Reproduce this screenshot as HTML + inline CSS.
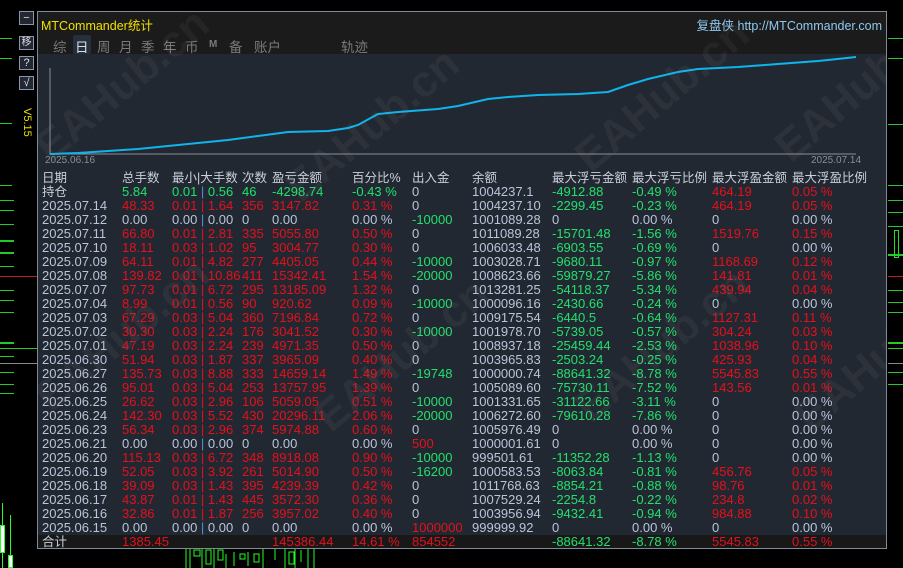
<!DOCTYPE html>
<html><head><meta charset="utf-8">
<style>
*{margin:0;padding:0;box-sizing:border-box}
body{width:903px;height:568px;background:#000;position:relative;overflow:hidden;font-family:"Liberation Sans","Noto Sans CJK SC",sans-serif;}
.ab{position:absolute}
.d{position:absolute;height:1px;background:#22cc22}
#panel{position:absolute;left:37px;top:11px;width:850px;height:538px;border:1px solid #7f8a9a;background:#222831;overflow:hidden}
#title{position:absolute;left:0;top:0;width:848px;height:42px;background:#1b1b1b}
.btn{position:absolute;left:19px;width:15px;height:14px;border:1px solid #8a96a8;background:#222831;color:#dde;font-size:11px;line-height:12px;text-align:center}
.tab{position:absolute;top:24px;font-size:13.5px;color:#7a7a7a}
.r{position:absolute;left:0;width:848px;height:14px;font-size:13px;line-height:14px;white-space:nowrap}
.r span{position:absolute;top:0}
.c1{left:4px}.c2{left:84px}.c3{left:134px}.c4{left:204px}.c5{left:234px}.c6{left:314px}.c7{left:374px}.c8{left:434px}.c9{left:514px}.c10{left:594px}.c11{left:674px}.c12{left:754px}
.g{color:#b9c5da}.R{color:#e5101c}.G{color:#22e06c}.h{color:#c8d0dc;font-size:12.5px}
.sep{color:#4a90d9;font-weight:normal}
.wm{position:absolute;color:rgba(160,160,170,0.08);font-size:44px;font-weight:bold;transform:rotate(-40deg);transform-origin:left bottom;white-space:nowrap}
</style></head><body>
<div class="d" style="left:0;top:38px;width:12px"></div><div class="d" style="left:0;top:58px;width:12px"></div>
<div class="d" style="left:0;top:123px;width:12px"></div><div class="d" style="left:0;top:185px;width:12px"></div>
<div class="d" style="left:0;top:200px;width:14px"></div><div class="d" style="left:0;top:210px;width:14px"></div>
<div class="d" style="left:0;top:224px;width:14px"></div><div class="d" style="left:0;top:240px;width:14px;height:2px"></div>
<div class="d" style="left:0;top:252px;width:14px;height:2px"></div><div class="d" style="left:0;top:266px;width:14px"></div>
<div class="d" style="left:0;top:276px;width:37px;background:#c02020"></div>
<div class="d" style="left:0;top:290px;width:14px"></div><div class="d" style="left:0;top:300px;width:14px"></div>
<div class="d" style="left:0;top:312px;width:14px"></div><div class="d" style="left:0;top:342px;width:14px;height:2px"></div>
<div class="d" style="left:0;top:348px;width:37px"></div><div class="d" style="left:0;top:356px;width:14px"></div>
<div class="d" style="left:0;top:363px;width:37px;background:#888"></div><div class="d" style="left:0;top:372px;width:14px"></div>
<div class="d" style="left:0;top:384px;width:14px"></div><div class="d" style="left:0;top:393px;width:14px"></div>
<div class="d" style="left:888px;top:38px;width:15px"></div><div class="d" style="left:888px;top:58px;width:15px"></div>
<div class="d" style="left:888px;top:124px;width:15px"></div><div class="d" style="left:888px;top:185px;width:15px"></div>
<div class="d" style="left:888px;top:200px;width:15px"></div><div class="d" style="left:888px;top:212px;width:15px"></div>
<div class="d" style="left:888px;top:226px;width:15px"></div><div class="d" style="left:888px;top:254px;width:15px;height:2px"></div>
<div class="d" style="left:888px;top:276px;width:15px;background:#c02020"></div><div class="d" style="left:888px;top:290px;width:15px"></div>
<div class="d" style="left:888px;top:302px;width:15px"></div><div class="d" style="left:888px;top:312px;width:15px"></div>
<div class="d" style="left:888px;top:342px;width:15px;height:2px"></div><div class="d" style="left:888px;top:348px;width:15px"></div>
<div class="d" style="left:888px;top:363px;width:15px;background:#888"></div><div class="d" style="left:888px;top:372px;width:15px"></div>
<div class="d" style="left:888px;top:384px;width:15px"></div>
<div class="ab" style="left:894px;top:230px;width:5px;height:28px;border:1px solid #2d2"></div>
<div class="ab" style="left:2px;top:503px;width:1px;height:65px;background:#2f2"></div>
<div class="ab" style="left:0;top:525px;width:5px;height:28px;background:#fff;border:1px solid #2f2"></div>
<div class="ab" style="left:10px;top:515px;width:1px;height:53px;background:#2f2"></div>
<div class="ab" style="left:8px;top:555px;width:5px;height:13px;background:#fff;border:1px solid #2f2"></div>
<svg class="ab" style="left:180px;top:548px" width="140" height="20"><g stroke="#2f2" fill="none"><path d="M6 0v20M10 0v20M14 2h6v6h-6zM22 0v20M26 2h5v14h-5zM34 0v20M38 2h5v10h-5zM46 6v14M54 4v14M60 6h5v5h-5zM68 4v14M74 6h5v8h-5zM83 0v20M95 0v12M105 0v20M109 4h5v12h-5zM115 0v20M121 2v12M128 0v20M134 0v20"/></g></svg>
<div class="btn" style="top:11px">−</div>
<div class="btn" style="top:36px;font-size:10px">移</div>
<div class="btn" style="top:56px">?</div>
<div class="btn" style="top:76px">√</div>
<div class="ab" style="top:108px;color:#e8e000;font-size:11px;transform:rotate(90deg);transform-origin:left top;left:33px">V5.15</div>

<div id="panel">
 <div id="title">
  <div class="ab" style="left:3px;top:3px;color:#f0e000;font-size:12.5px">MTCommander统计</div>
  <div class="ab" style="right:4px;top:3px;color:#8ec8f0;font-size:12.5px">复盘侠 http://MTCommander.com</div>
  <div class="ab" style="left:35px;top:23px;width:18px;height:19px;background:#26303c;border-radius:2px"></div>
  <span class="tab" style="left:15px">综</span>
  <span class="tab" style="left:37px;color:#d8e0ea">日</span>
  <span class="tab" style="left:59px">周</span>
  <span class="tab" style="left:81px">月</span>
  <span class="tab" style="left:103px">季</span>
  <span class="tab" style="left:125px">年</span>
  <span class="tab" style="left:147px">币</span>
  <span class="tab" style="left:171px;font-size:10px;top:27px;font-weight:bold">M</span>
  <span class="tab" style="left:191px">备</span>
  <span class="tab" style="left:216px">账户</span>
  <span class="tab" style="left:303px">轨迹</span>
 </div>
 <svg class="ab" style="left:0;top:0" width="848" height="170">
  <path d="M12 56V142H818" stroke="#8a8f96" fill="none"/>
  <polyline fill="none" stroke="#10b4ec" stroke-width="2" points="12,142 40,141 70,139 100,137 130,134 160,131 190,128 220,124 250,120 290,119 310,116 320,113 340,102 360,100 400,97 420,94 450,87 470,85 500,83 540,82 570,80 590,73 610,67 640,60 660,57 700,55 740,52 780,49 790,48 818,45"/>
 </svg>
 <div class="ab" style="left:7px;top:143px;color:#8a8f96;font-size:10px">2025.06.16</div>
 <div class="ab" style="left:773px;top:143px;color:#8a8f96;font-size:10px">2025.07.14</div>

 <div class="r h" style="top:159px"><span class="c1">日期</span><span class="c2">总手数</span><span class="c3">最小|大手数</span><span class="c4">次数</span><span class="c5">盈亏金额</span><span class="c6">百分比%</span><span class="c7">出入金</span><span class="c8">余额</span><span class="c9">最大浮亏金额</span><span class="c10">最大浮亏比例</span><span class="c11">最大浮盈金额</span><span class="c12">最大浮盈比例</span></div>
 <div class="r" style="top:173px"><span class="c1 h">持仓</span><span class="c2 G">5.84</span><span class="c3 G">0.01 <b class="sep">|</b> 0.56</span><span class="c4 G">46</span><span class="c5 G">-4298.74</span><span class="c6 G">-0.43 %</span><span class="c7 g">0</span><span class="c8 g">1004237.1</span><span class="c9 G">-4912.88</span><span class="c10 G">-0.49 %</span><span class="c11 R">464.19</span><span class="c12 R">0.05 %</span></div>
 <div class="r" style="top:187px"><span class="c1 g">2025.07.14</span><span class="c2 R">48.33</span><span class="c3 R">0.01 | 1.64</span><span class="c4 R">356</span><span class="c5 R">3147.82</span><span class="c6 R">0.31 %</span><span class="c7 g">0</span><span class="c8 g">1004237.10</span><span class="c9 G">-2299.45</span><span class="c10 G">-0.23 %</span><span class="c11 R">464.19</span><span class="c12 R">0.05 %</span></div>
 <div class="r" style="top:201px"><span class="c1 g">2025.07.12</span><span class="c2 g">0.00</span><span class="c3 g">0.00 <b class="sep">|</b> 0.00</span><span class="c4 g">0</span><span class="c5 g">0.00</span><span class="c6 g">0.00 %</span><span class="c7 G">-10000</span><span class="c8 g">1001089.28</span><span class="c9 g">0</span><span class="c10 g">0.00 %</span><span class="c11 g">0</span><span class="c12 g">0.00 %</span></div>
 <div class="r" style="top:215px"><span class="c1 g">2025.07.11</span><span class="c2 R">66.80</span><span class="c3 R">0.01 | 2.81</span><span class="c4 R">335</span><span class="c5 R">5055.80</span><span class="c6 R">0.50 %</span><span class="c7 g">0</span><span class="c8 g">1011089.28</span><span class="c9 G">-15701.48</span><span class="c10 G">-1.56 %</span><span class="c11 R">1519.76</span><span class="c12 R">0.15 %</span></div>
 <div class="r" style="top:229px"><span class="c1 g">2025.07.10</span><span class="c2 R">18.11</span><span class="c3 R">0.03 | 1.02</span><span class="c4 R">95</span><span class="c5 R">3004.77</span><span class="c6 R">0.30 %</span><span class="c7 g">0</span><span class="c8 g">1006033.48</span><span class="c9 G">-6903.55</span><span class="c10 G">-0.69 %</span><span class="c11 g">0</span><span class="c12 g">0.00 %</span></div>
 <div class="r" style="top:243px"><span class="c1 g">2025.07.09</span><span class="c2 R">64.11</span><span class="c3 R">0.01 | 4.82</span><span class="c4 R">277</span><span class="c5 R">4405.05</span><span class="c6 R">0.44 %</span><span class="c7 G">-10000</span><span class="c8 g">1003028.71</span><span class="c9 G">-9680.11</span><span class="c10 G">-0.97 %</span><span class="c11 R">1168.69</span><span class="c12 R">0.12 %</span></div>
 <div class="r" style="top:257px"><span class="c1 g">2025.07.08</span><span class="c2 R">139.82</span><span class="c3 R">0.01 | 10.86</span><span class="c4 R">411</span><span class="c5 R">15342.41</span><span class="c6 R">1.54 %</span><span class="c7 G">-20000</span><span class="c8 g">1008623.66</span><span class="c9 G">-59879.27</span><span class="c10 G">-5.86 %</span><span class="c11 R">141.81</span><span class="c12 R">0.01 %</span></div>
 <div class="r" style="top:271px"><span class="c1 g">2025.07.07</span><span class="c2 R">97.73</span><span class="c3 R">0.01 | 6.72</span><span class="c4 R">295</span><span class="c5 R">13185.09</span><span class="c6 R">1.32 %</span><span class="c7 g">0</span><span class="c8 g">1013281.25</span><span class="c9 G">-54118.37</span><span class="c10 G">-5.34 %</span><span class="c11 R">439.94</span><span class="c12 R">0.04 %</span></div>
 <div class="r" style="top:285px"><span class="c1 g">2025.07.04</span><span class="c2 R">8.99</span><span class="c3 R">0.01 | 0.56</span><span class="c4 R">90</span><span class="c5 R">920.62</span><span class="c6 R">0.09 %</span><span class="c7 G">-10000</span><span class="c8 g">1000096.16</span><span class="c9 G">-2430.66</span><span class="c10 G">-0.24 %</span><span class="c11 g">0</span><span class="c12 g">0.00 %</span></div>
 <div class="r" style="top:299px"><span class="c1 g">2025.07.03</span><span class="c2 R">67.29</span><span class="c3 R">0.03 | 5.04</span><span class="c4 R">360</span><span class="c5 R">7196.84</span><span class="c6 R">0.72 %</span><span class="c7 g">0</span><span class="c8 g">1009175.54</span><span class="c9 G">-6440.5</span><span class="c10 G">-0.64 %</span><span class="c11 R">1127.31</span><span class="c12 R">0.11 %</span></div>
 <div class="r" style="top:313px"><span class="c1 g">2025.07.02</span><span class="c2 R">30.30</span><span class="c3 R">0.03 | 2.24</span><span class="c4 R">176</span><span class="c5 R">3041.52</span><span class="c6 R">0.30 %</span><span class="c7 G">-10000</span><span class="c8 g">1001978.70</span><span class="c9 G">-5739.05</span><span class="c10 G">-0.57 %</span><span class="c11 R">304.24</span><span class="c12 R">0.03 %</span></div>
 <div class="r" style="top:327px"><span class="c1 g">2025.07.01</span><span class="c2 R">47.19</span><span class="c3 R">0.03 | 2.24</span><span class="c4 R">239</span><span class="c5 R">4971.35</span><span class="c6 R">0.50 %</span><span class="c7 g">0</span><span class="c8 g">1008937.18</span><span class="c9 G">-25459.44</span><span class="c10 G">-2.53 %</span><span class="c11 R">1038.96</span><span class="c12 R">0.10 %</span></div>
 <div class="r" style="top:341px"><span class="c1 g">2025.06.30</span><span class="c2 R">51.94</span><span class="c3 R">0.03 | 1.87</span><span class="c4 R">337</span><span class="c5 R">3965.09</span><span class="c6 R">0.40 %</span><span class="c7 g">0</span><span class="c8 g">1003965.83</span><span class="c9 G">-2503.24</span><span class="c10 G">-0.25 %</span><span class="c11 R">425.93</span><span class="c12 R">0.04 %</span></div>
 <div class="r" style="top:355px"><span class="c1 g">2025.06.27</span><span class="c2 R">135.73</span><span class="c3 R">0.03 | 8.88</span><span class="c4 R">333</span><span class="c5 R">14659.14</span><span class="c6 R">1.49 %</span><span class="c7 G">-19748</span><span class="c8 g">1000000.74</span><span class="c9 G">-88641.32</span><span class="c10 G">-8.78 %</span><span class="c11 R">5545.83</span><span class="c12 R">0.55 %</span></div>
 <div class="r" style="top:369px"><span class="c1 g">2025.06.26</span><span class="c2 R">95.01</span><span class="c3 R">0.03 | 5.04</span><span class="c4 R">253</span><span class="c5 R">13757.95</span><span class="c6 R">1.39 %</span><span class="c7 g">0</span><span class="c8 g">1005089.60</span><span class="c9 G">-75730.11</span><span class="c10 G">-7.52 %</span><span class="c11 R">143.56</span><span class="c12 R">0.01 %</span></div>
 <div class="r" style="top:383px"><span class="c1 g">2025.06.25</span><span class="c2 R">26.62</span><span class="c3 R">0.03 | 2.96</span><span class="c4 R">106</span><span class="c5 R">5059.05</span><span class="c6 R">0.51 %</span><span class="c7 G">-10000</span><span class="c8 g">1001331.65</span><span class="c9 G">-31122.66</span><span class="c10 G">-3.11 %</span><span class="c11 g">0</span><span class="c12 g">0.00 %</span></div>
 <div class="r" style="top:397px"><span class="c1 g">2025.06.24</span><span class="c2 R">142.30</span><span class="c3 R">0.03 | 5.52</span><span class="c4 R">430</span><span class="c5 R">20296.11</span><span class="c6 R">2.06 %</span><span class="c7 G">-20000</span><span class="c8 g">1006272.60</span><span class="c9 G">-79610.28</span><span class="c10 G">-7.86 %</span><span class="c11 g">0</span><span class="c12 g">0.00 %</span></div>
 <div class="r" style="top:411px"><span class="c1 g">2025.06.23</span><span class="c2 R">56.34</span><span class="c3 R">0.03 | 2.96</span><span class="c4 R">374</span><span class="c5 R">5974.88</span><span class="c6 R">0.60 %</span><span class="c7 g">0</span><span class="c8 g">1005976.49</span><span class="c9 g">0</span><span class="c10 g">0.00 %</span><span class="c11 g">0</span><span class="c12 g">0.00 %</span></div>
 <div class="r" style="top:425px"><span class="c1 g">2025.06.21</span><span class="c2 g">0.00</span><span class="c3 g">0.00 <b class="sep">|</b> 0.00</span><span class="c4 g">0</span><span class="c5 g">0.00</span><span class="c6 g">0.00 %</span><span class="c7 R">500</span><span class="c8 g">1000001.61</span><span class="c9 g">0</span><span class="c10 g">0.00 %</span><span class="c11 g">0</span><span class="c12 g">0.00 %</span></div>
 <div class="r" style="top:439px"><span class="c1 g">2025.06.20</span><span class="c2 R">115.13</span><span class="c3 R">0.03 | 6.72</span><span class="c4 R">348</span><span class="c5 R">8918.08</span><span class="c6 R">0.90 %</span><span class="c7 G">-10000</span><span class="c8 g">999501.61</span><span class="c9 G">-11352.28</span><span class="c10 G">-1.13 %</span><span class="c11 g">0</span><span class="c12 g">0.00 %</span></div>
 <div class="r" style="top:453px"><span class="c1 g">2025.06.19</span><span class="c2 R">52.05</span><span class="c3 R">0.03 | 3.92</span><span class="c4 R">261</span><span class="c5 R">5014.90</span><span class="c6 R">0.50 %</span><span class="c7 G">-16200</span><span class="c8 g">1000583.53</span><span class="c9 G">-8063.84</span><span class="c10 G">-0.81 %</span><span class="c11 R">456.76</span><span class="c12 R">0.05 %</span></div>
 <div class="r" style="top:467px"><span class="c1 g">2025.06.18</span><span class="c2 R">39.09</span><span class="c3 R">0.03 | 1.43</span><span class="c4 R">395</span><span class="c5 R">4239.39</span><span class="c6 R">0.42 %</span><span class="c7 g">0</span><span class="c8 g">1011768.63</span><span class="c9 G">-8854.21</span><span class="c10 G">-0.88 %</span><span class="c11 R">98.76</span><span class="c12 R">0.01 %</span></div>
 <div class="r" style="top:481px"><span class="c1 g">2025.06.17</span><span class="c2 R">43.87</span><span class="c3 R">0.01 | 1.43</span><span class="c4 R">445</span><span class="c5 R">3572.30</span><span class="c6 R">0.36 %</span><span class="c7 g">0</span><span class="c8 g">1007529.24</span><span class="c9 G">-2254.8</span><span class="c10 G">-0.22 %</span><span class="c11 R">234.8</span><span class="c12 R">0.02 %</span></div>
 <div class="r" style="top:495px"><span class="c1 g">2025.06.16</span><span class="c2 R">32.86</span><span class="c3 R">0.01 | 1.87</span><span class="c4 R">256</span><span class="c5 R">3957.02</span><span class="c6 R">0.40 %</span><span class="c7 g">0</span><span class="c8 g">1003956.94</span><span class="c9 G">-9432.41</span><span class="c10 G">-0.94 %</span><span class="c11 R">984.88</span><span class="c12 R">0.10 %</span></div>
 <div class="r" style="top:509px"><span class="c1 g">2025.06.15</span><span class="c2 g">0.00</span><span class="c3 g">0.00 <b class="sep">|</b> 0.00</span><span class="c4 g">0</span><span class="c5 g">0.00</span><span class="c6 g">0.00 %</span><span class="c7 R">1000000</span><span class="c8 g">999999.92</span><span class="c9 g">0</span><span class="c10 g">0.00 %</span><span class="c11 g">0</span><span class="c12 g">0.00 %</span></div>
 <div class="ab" style="left:0;top:523px;width:848px;height:14px;background:#181818"></div>
 <div class="r" style="top:523px"><span class="c1 h">合计</span><span class="c2 R">1385.45</span><span class="c5 R">145386.44</span><span class="c6 R">14.61 %</span><span class="c7 R">854552</span><span class="c9 G">-88641.32</span><span class="c10 G">-8.78 %</span><span class="c11 R">5545.83</span><span class="c12 R">0.55 %</span></div>

 <div class="wm" style="left:20px;top:110px">EAHub.cn</div>
 <div class="wm" style="left:270px;top:150px">EAHub.cn</div>
 <div class="wm" style="left:560px;top:120px">EAHub.cn</div>
 <div class="wm" style="left:760px;top:110px">EAHub</div>
 <div class="wm" style="left:20px;top:360px">EAHub.cn</div>
 <div class="wm" style="left:300px;top:380px">EAHub.cn</div>
 <div class="wm" style="left:560px;top:370px">EAHub.cn</div>
 <div class="wm" style="left:780px;top:380px">EAHub</div>
</div>
</body></html>
